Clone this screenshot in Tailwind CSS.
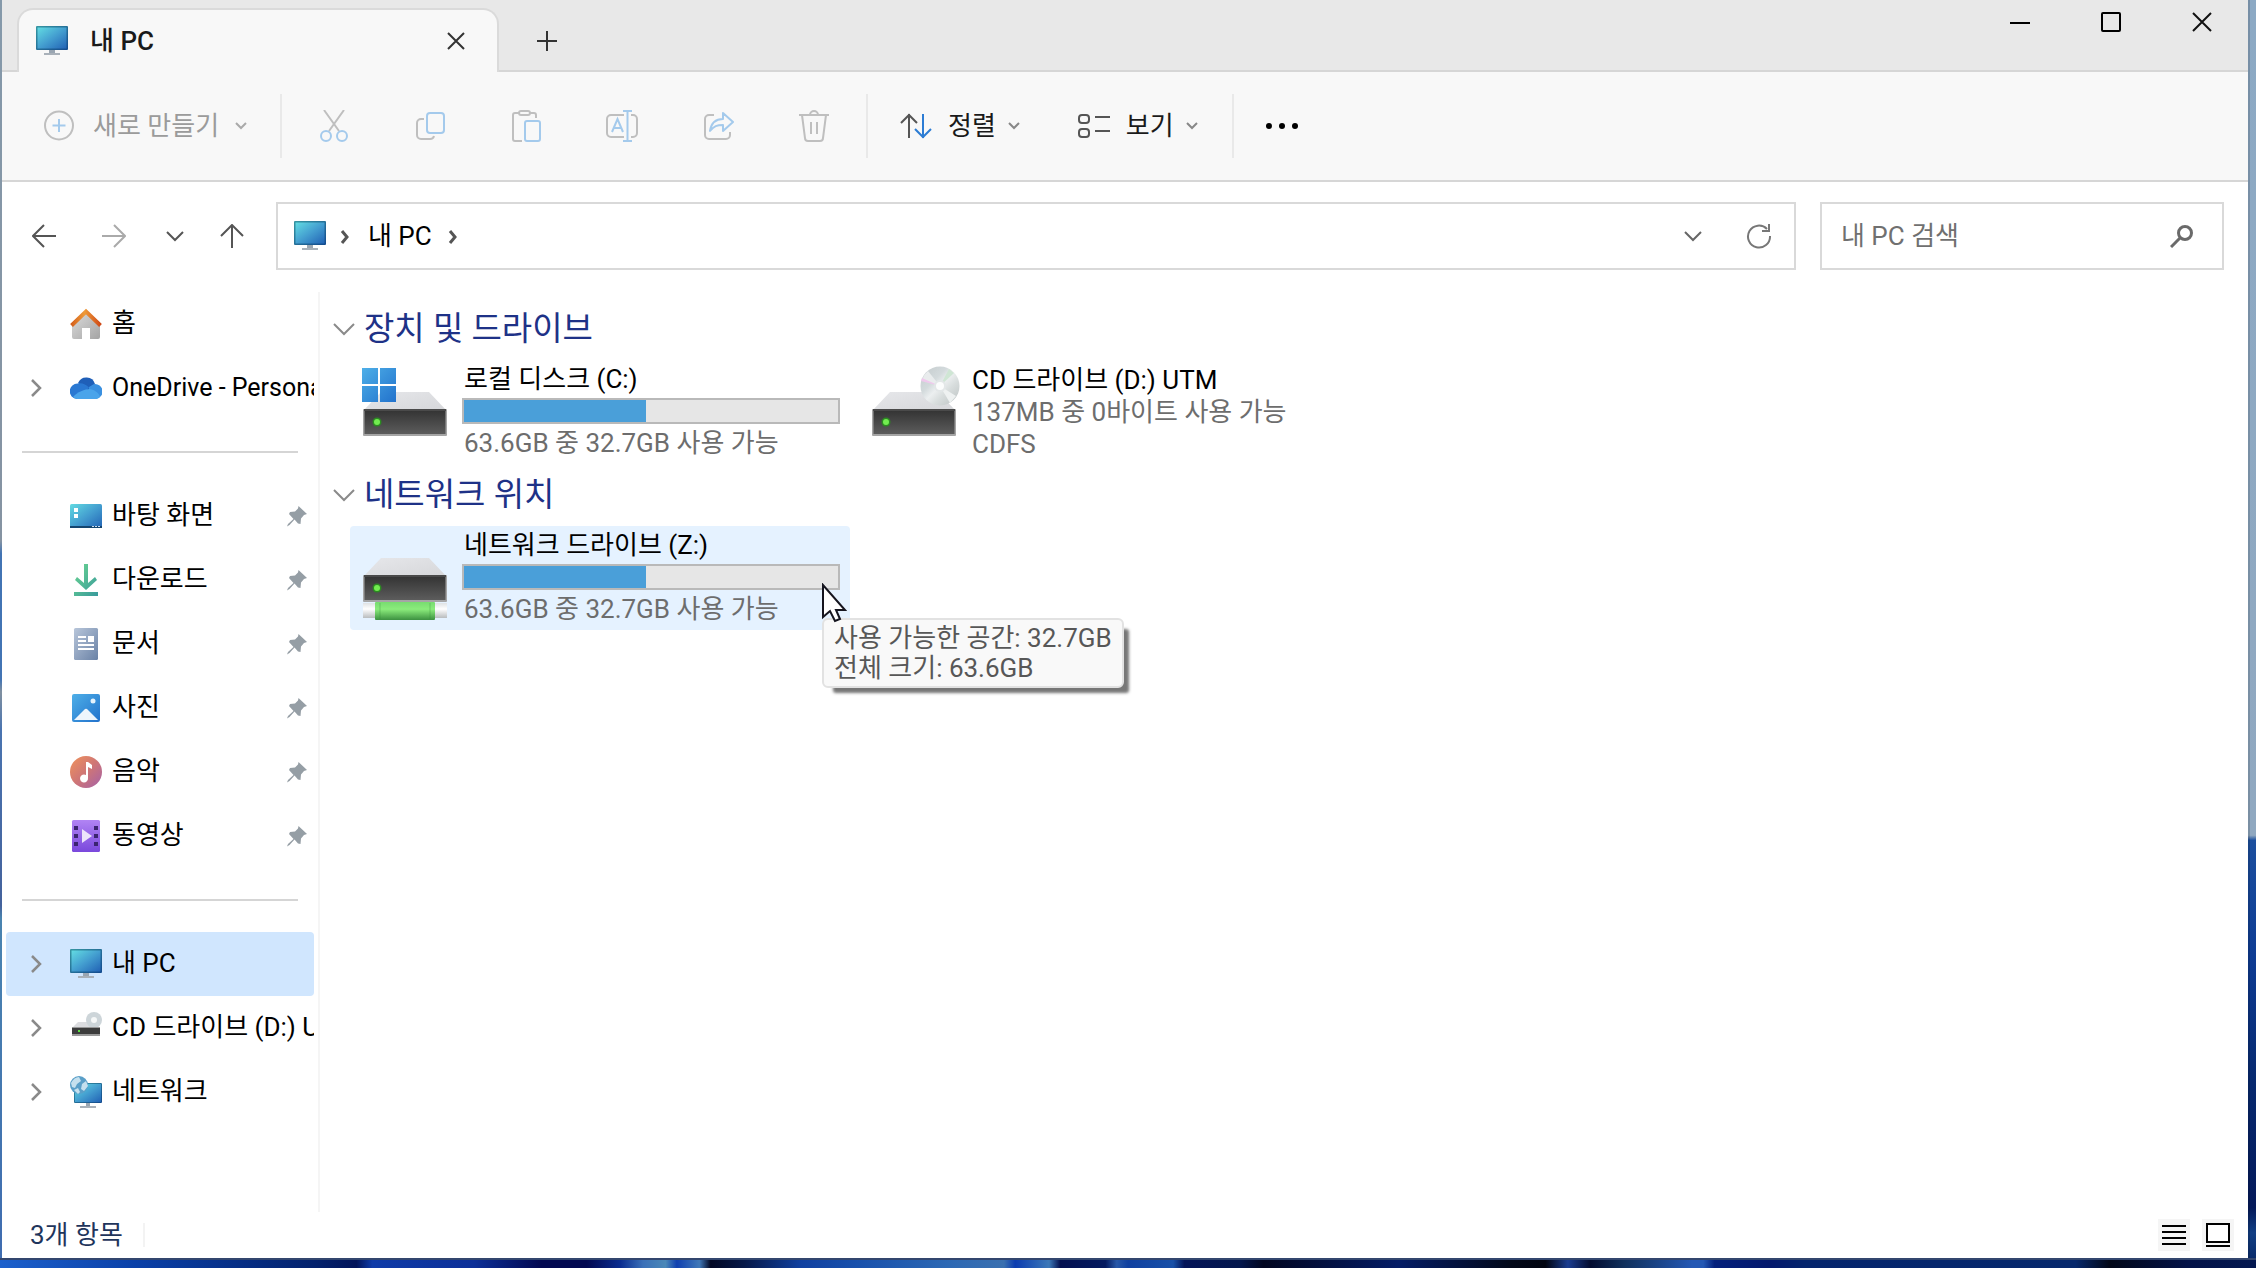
<!DOCTYPE html>
<html lang="ko">
<head>
<meta charset="utf-8">
<title>내 PC</title>
<script src="https://cdn.jsdelivr.net/npm/@tailwindcss/browser@4"></script>
</head>
<body class="font-[Roboto,'Noto_Sans_CJK_KR',sans-serif] text-black">
<svg class="absolute w-0 h-0" aria-hidden="true">
  <defs>
    <linearGradient id="gScreen" x1="0" y1="0" x2="1" y2="1"><stop offset="0" stop-color="#62dbe2"/><stop offset=".5" stop-color="#449fd0"/><stop offset="1" stop-color="#2263b5"/></linearGradient>
    <linearGradient id="gFrame" x1="0" y1="0" x2="1" y2="1"><stop offset="0" stop-color="#3796a2"/><stop offset="1" stop-color="#134a8e"/></linearGradient>
    <linearGradient id="gTop" x1="0" y1="0" x2="1" y2="1"><stop offset="0" stop-color="#e6e7ea"/><stop offset="1" stop-color="#d6d7da"/></linearGradient>
    <linearGradient id="gBox" x1="0" y1="0" x2="0" y2="1"><stop offset="0" stop-color="#333"/><stop offset="1" stop-color="#5c5c5c"/></linearGradient>
    <linearGradient id="gWin" x1="0" y1="0" x2="1" y2="1"><stop offset="0" stop-color="#4eafe8"/><stop offset="1" stop-color="#2272cc"/></linearGradient>
    <linearGradient id="gRoof" x1="0" y1="0" x2="1" y2="0"><stop offset="0" stop-color="#d4601c"/><stop offset=".45" stop-color="#ee9a38"/><stop offset="1" stop-color="#cf4a18"/></linearGradient>
    <linearGradient id="gHouse" x1="0" y1="0" x2="1" y2="1"><stop offset="0" stop-color="#dcdcdc"/><stop offset="1" stop-color="#a4a4a4"/></linearGradient>
    <linearGradient id="gDown" x1="0" y1="0" x2="1" y2="1"><stop offset="0" stop-color="#6cd690"/><stop offset="1" stop-color="#389a9c"/></linearGradient>
    <linearGradient id="gDoc" x1="0" y1="0" x2="1" y2="1"><stop offset="0" stop-color="#b8c6da"/><stop offset="1" stop-color="#6a82a6"/></linearGradient>
    <linearGradient id="gMusic" x1="0" y1="0" x2="1" y2="1"><stop offset="0" stop-color="#f0935a"/><stop offset=".5" stop-color="#cf7676"/><stop offset="1" stop-color="#a561a8"/></linearGradient>
    <linearGradient id="gVideo" x1="0" y1="0" x2="0" y2="1"><stop offset="0" stop-color="#b184f4"/><stop offset="1" stop-color="#7a48dc"/></linearGradient>
    <linearGradient id="gDisc" x1="0" y1="0" x2="1" y2="1"><stop offset="0" stop-color="#c3cacc"/><stop offset=".35" stop-color="#d3dadc"/><stop offset=".5" stop-color="#eceff0"/><stop offset=".65" stop-color="#d9dede"/><stop offset="1" stop-color="#b9c0c0"/></linearGradient>
    <linearGradient id="gPipe" x1="0" y1="0" x2="0" y2="1"><stop offset="0" stop-color="#dfe2e4"/><stop offset=".4" stop-color="#fff"/><stop offset="1" stop-color="#b9bcbe"/></linearGradient>
    <linearGradient id="gGreen" x1="0" y1="0" x2="0" y2="1"><stop offset="0" stop-color="#78dc70"/><stop offset=".4" stop-color="#8bec7c"/><stop offset="1" stop-color="#3c9140"/></linearGradient>
    <symbol id="monitor" viewBox="0 0 32 32"><path d="M13 25h6v4h-6z" fill="#9aa6b2"/><path d="M8 28h16v2H8z" fill="#a9b1b9"/><rect y="1" width="32" height="24" rx="1" fill="url(#gFrame)"/><rect x="1.500" y="2.500" width="29" height="21" fill="url(#gScreen)"/></symbol>
    <symbol id="pin" viewBox="0 0 22 22"><path d="M12.500 1 21 9l-3 1-3 3.500-.500 5.500-2.500-.500-3.500-4-5 5.500-2.500 1.500 1-2.500 5.500-5L3 9l1-2 5-.500 3-3z" fill="#959ea5"/></symbol>
    <symbol id="right" viewBox="0 0 12 20"><path d="m2 2 8 8-8 8" fill="none" stroke="#8a8a8a" stroke-width="2.500"/></symbol>
    <symbol id="down" viewBox="0 0 12 8"><path d="m1 1 5 5 5-5" fill="none" stroke="currentColor" stroke-width="2"/></symbol>
    <symbol id="drive" viewBox="0 0 84 46"><path d="M18 1h48l17 18H1z" fill="url(#gTop)"/><rect y="18" width="84" height="27" rx="1" fill="#a5a5a5"/><rect x="1.500" y="19" width="81" height="24" fill="url(#gBox)"/><path d="M1 18h82v2H1z" fill="#4a4a4a"/><circle cx="14" cy="31" r="4.500" fill="#2c8a22"/><circle cx="14" cy="31" r="3" fill="#72ec50"/></symbol>
    <symbol id="disc" viewBox="0 0 40 40"><circle cx="20" cy="20" r="19.500" fill="url(#gDisc)"/><path d="M20 20 2 14A19 19 0 0 1 8 5z" fill="#e9eced"/><path d="m20 20-19-5 1-3z" fill="#efc9ec"/><path d="m20 20 9-17 5 4z" fill="#cfe6d4"/><path d="m20 20 16 10-6 7z" fill="#eef1f1"/><circle cx="20" cy="20" r="6" fill="#e3e7e8"/><circle cx="20" cy="20" r="4" fill="#fbfcfc"/></symbol>
  </defs>
</svg>

<div class="grid min-h-screen grid-cols-[2px_minmax(0,1fr)_8px] grid-rows-[1fr_10px]">
  <div class="bg-[linear-gradient(#8599aa_0%,#8593a2_43%,#4274b4_44%,#4274b4_54%,#8090a0_55%,#4a74b0_58%,#44629c_72%,#4a84b0_73%,#3f6cb0_100%)]"></div>

  <div class="flex min-w-0 flex-col bg-white">
    <!-- Title bar -->
    <header class="flex h-[72px] shrink-0 items-start bg-[#e8e8e8] shadow-[inset_0_-2px_0_#d6d6d6]">
      <div class="ml-[15px] mt-2 flex h-16 w-[482px] items-center rounded-t-2xl border-2 border-b-0 border-[#dadada] bg-[#f8f8f8] pl-[17px] pr-8">
        <svg class="size-8"><use href="#monitor"/></svg>
        <h1 class="ml-[22px] text-[26px] leading-8 font-medium text-[#1a1a1a]">내 PC</h1>
        <button class="ml-auto" aria-label="탭 닫기"><svg class="size-[18px]" viewBox="0 0 18 18"><path d="m1 1 16 16M17 1 1 17" stroke="#333" stroke-width="2"/></svg></button>
      </div>
      <button class="ml-[38px] mt-[31px]" aria-label="새 탭"><svg class="size-5" viewBox="0 0 20 20"><path d="M10 0v20M0 10h20" stroke="#333" stroke-width="2"/></svg></button>
      <div class="ml-auto mr-9 mt-3 flex gap-[71px]">
        <button aria-label="최소화"><svg class="size-5" viewBox="0 0 20 20"><path d="M0 11h20" stroke="#000" stroke-width="2"/></svg></button>
        <button aria-label="최대화"><svg class="size-5" viewBox="0 0 20 20"><rect x="1" y="1" width="18" height="18" rx="1" fill="none" stroke="#000" stroke-width="2"/></svg></button>
        <button aria-label="닫기"><svg class="size-5" viewBox="0 0 20 20"><path d="m1 1 18 18M19 1 1 19" stroke="#111" stroke-width="2"/></svg></button>
      </div>
    </header>

    <!-- Command bar -->
    <div class="flex h-[110px] shrink-0 items-center border-b-2 border-[#d6d6d6] bg-[#f8f8f8] text-[26px] leading-8">
      <button class="flex w-[278px] items-center pl-[41px] text-[#9b9b9b]" disabled>
        <svg class="size-8" viewBox="0 0 32 32" fill="none" stroke-width="2"><circle cx="16" cy="15.500" r="14" stroke="#bfbfbf"/><path d="M16 9v13M9.500 15.500h13" stroke="#a4caec"/></svg>
        <span class="ml-[18px]">새로 만들기</span>
        <svg class="ml-4 h-2 w-3 text-[#aaa]"><use href="#down"/></svg>
      </button>
      <div class="h-16 w-[2px] bg-[#e9e9e9]"></div>
      <div class="flex w-[584px] justify-between px-1">
        <button class="flex w-24 justify-center" aria-label="잘라내기" disabled><svg class="size-8" viewBox="0 0 32 32" fill="none" stroke-width="2"><path d="m6 0 15 21M26 0 11 21" stroke="#bfbfbf"/><circle cx="8" cy="26" r="5" stroke="#a4caec"/><circle cx="24" cy="26" r="5" stroke="#a4caec"/></svg></button>
        <button class="flex w-24 justify-center" aria-label="복사" disabled><svg class="size-8" viewBox="0 0 32 32" fill="none" stroke-width="2"><path d="M10 9H7a4 4 0 0 0-4 4v12a4 4 0 0 0 4 4h9a4 4 0 0 0 4-3" stroke="#bfbfbf"/><rect x="13" y="3" width="17" height="20" rx="3" stroke="#a4caec"/></svg></button>
        <button class="flex w-24 justify-center" aria-label="붙여넣기" disabled><svg class="size-8" viewBox="0 0 32 32" fill="none" stroke-width="2"><path d="M12 31H5a2 2 0 0 1-2-2V5a2 2 0 0 1 2-2h4M19 3h5a2 2 0 0 1 2 2v3" stroke="#bfbfbf"/><rect x="9" y="1" width="11" height="4" rx="2" stroke="#bfbfbf"/><rect x="15" y="11" width="15" height="20" rx="2" stroke="#a4caec"/></svg></button>
        <button class="flex w-24 justify-center" aria-label="이름 바꾸기" disabled><svg class="size-8" viewBox="0 0 32 32" fill="none" stroke-width="2"><path d="M18 5H5a4 4 0 0 0-4 4v14a4 4 0 0 0 4 4h13M25 5h2a4 4 0 0 1 4 4v14a4 4 0 0 1-4 4h-2" stroke="#bfbfbf"/><path d="M21.500 1v30M17 1h9M17 31h9M6 22l5.500-13L17 22M8 18h7" stroke="#a4caec"/></svg></button>
        <button class="flex w-24 justify-center" aria-label="공유" disabled><svg class="size-8" viewBox="0 0 32 32" fill="none" stroke-width="2"><path d="M12 5H7a4 4 0 0 0-4 4v16a4 4 0 0 0 4 4h17a4 4 0 0 0 4-4v-3" stroke="#bfbfbf"/><path d="M21 3v6C13 9 9 14 8 21c4-5 7-6 13-6v6l10-9z" stroke="#a4caec" stroke-linejoin="round"/></svg></button>
        <button class="flex w-24 justify-center" aria-label="삭제" disabled><svg class="size-8" viewBox="0 0 32 32" fill="none" stroke="#bfbfbf" stroke-width="2"><path d="M1 5h30M4 5l3 23a3 3 0 0 0 3 3h12a3 3 0 0 0 3-3l3-23M12 5a4 4 0 0 1 8 0M13 12v12M19 12v12"/></svg></button>
      </div>
      <div class="h-16 w-[2px] bg-[#e9e9e9]"></div>
      <button class="ml-8 flex items-center text-[#1a1a1a]">
        <svg class="size-8" viewBox="0 0 32 32" fill="none" stroke-width="2"><path d="M9 28V4M1 13l8-8 8 8" stroke="#555"/><path d="M23 4v24M15 19l8 8 8-8" stroke="#2c7cd4"/></svg>
        <span class="ml-4">정렬</span>
        <svg class="ml-3 h-2 w-3 text-[#888]"><use href="#down"/></svg>
      </button>
      <button class="ml-[58px] flex items-center text-[#1a1a1a]">
        <svg class="size-8" viewBox="0 0 32 32" fill="none" stroke="#555" stroke-width="2"><rect x="1" y="5" width="10" height="8" rx="3"/><rect x="1" y="19" width="10" height="8" rx="3"/><path d="M17 7h15M17 21h15"/></svg>
        <span class="ml-4">보기</span>
        <svg class="ml-3 h-2 w-3 text-[#888]"><use href="#down"/></svg>
      </button>
      <div class="ml-[34px] h-16 w-[2px] bg-[#e9e9e9]"></div>
      <button class="ml-8" aria-label="더 보기"><svg class="h-1.5 w-8" viewBox="0 0 32 6"><circle cx="3" cy="3" r="3"/><circle cx="16" cy="3" r="3"/><circle cx="29" cy="3" r="3"/></svg></button>
    </div>

    <!-- Address row -->
    <div class="flex h-[108px] shrink-0 items-center pl-[30px] pr-6">
      <nav class="flex w-[244px] items-center" aria-label="탐색">
        <button aria-label="뒤로"><svg class="size-6" viewBox="0 0 24 24" fill="none" stroke="#555" stroke-width="2"><path d="M24 12H2M12 1 1 12l11 11"/></svg></button>
        <button class="ml-[46px]" aria-label="앞으로"><svg class="size-6" viewBox="0 0 24 24" fill="none" stroke="#aaa" stroke-width="2"><path d="M0 12h22M12 1l11 11-11 11"/></svg></button>
        <button class="ml-10" aria-label="최근 위치"><svg class="h-3 w-[18px]" viewBox="0 0 18 12" fill="none" stroke="#555" stroke-width="2"><path d="m1 2 8 8 8-8"/></svg></button>
        <button class="ml-9" aria-label="위로"><svg class="size-6" viewBox="0 0 24 24" fill="none" stroke="#555" stroke-width="2"><path d="M12 24V2M1 12 12 1l11 11"/></svg></button>
      </nav>
      <div class="flex h-[68px] min-w-0 flex-1 items-center border-2 border-[#d9d9d9] pl-4 pr-[22px] text-[26px] leading-8">
        <svg class="size-8"><use href="#monitor"/></svg>
        <svg class="ml-3.5 h-4 w-2.5" viewBox="0 0 10 16" fill="none" stroke="#555" stroke-width="3"><path d="m2 3 5 6-5 6"/></svg>
        <a href="#" class="ml-[18px]">내 PC</a>
        <svg class="ml-4 h-4 w-2.5" viewBox="0 0 10 16" fill="none" stroke="#555" stroke-width="3"><path d="m2 3 5 6-5 6"/></svg>
        <button class="ml-auto" aria-label="이전 위치"><svg class="h-3 w-[18px]" viewBox="0 0 18 12" fill="none" stroke="#666" stroke-width="2"><path d="m1 2 8 8 8-8"/></svg></button>
        <button class="ml-11" aria-label="새로 고침"><svg class="size-[26px]" viewBox="0 0 26 26" fill="none" stroke="#777" stroke-width="2"><path d="M21 6a11 11 0 1 0 3 7M23 1v7h-7"/></svg></button>
      </div>
      <label class="ml-6 flex h-[68px] w-[404px] items-center border-2 border-[#d9d9d9] pl-[19px] pr-7">
        <input type="text" aria-label="내 PC 검색" placeholder="내 PC 검색" class="min-w-0 flex-1 text-[26px] leading-8 outline-none placeholder:text-[#707070]">
        <svg class="size-6" viewBox="0 0 24 24" fill="none" stroke="#6a6a6a" stroke-width="3"><circle cx="15" cy="9" r="6.500"/><path d="M10.500 13.500 1 23"/></svg>
      </label>
    </div>

    <div class="flex flex-1 pt-0.5">
      <!-- Navigation pane -->
      <aside class="w-[318px] shrink-0 border-r-2 border-[#f5f5f5] px-1">
        <ul class="text-[26px] leading-8 [&>li>a]:flex [&>li>a]:h-16 [&>li>a]:items-center [&>li>a]:overflow-hidden [&>li>a]:whitespace-nowrap [&>li>a]:rounded [&>li>a]:pl-6">
          <li><a href="#"><span class="mr-7 w-3"></span><svg class="size-8 shrink-0" viewBox="0 0 32 32"><path d="M2 17 16 4l14 13v12a2 2 0 0 1-2 2h-8V20h-8v11H4a2 2 0 0 1-2-2z" fill="url(#gHouse)"/><path d="M1.500 17.500 16 3.500l14.500 14" fill="none" stroke="url(#gRoof)" stroke-width="4"/></svg><span class="ml-2.5 mb-0.5">홈</span></a></li>
          <li><a href="#" class="text-[25px]"><svg class="mr-7 h-5 w-3 shrink-0"><use href="#right"/></svg><svg class="size-8 shrink-0" viewBox="0 0 32 32"><path d="M8 11a9 9 0 0 1 17 1l-7 8z" fill="#1f5fb8"/><path d="M7 27a7 7 0 0 1 1-15.500c4-1 8 1 11 4L10 27z" fill="#2a78d2"/><path d="M24 12a7.500 7.500 0 0 1 2 15h-8l1-12z" fill="#3a90e0"/><path d="M3 25c4-5 12-8 17-8 5 1 9 4 10 8a7 7 0 0 1-4 2H7a7 7 0 0 1-4-2z" fill="#4aa4ea"/></svg><span class="ml-2.5">OneDrive - Personal</span></a></li>
          <li class="flex h-16 items-center" role="separator"><div class="mx-4 h-[2px] flex-1 bg-[#d5d5d5]"></div></li>
          <li><a href="#"><span class="mr-7 w-3"></span><svg class="size-8 shrink-0" viewBox="0 0 32 32"><rect y="4" width="32" height="24" rx="1.500" fill="url(#gScreen)"/><path d="M0 26h32v2H0z" fill="#13456f"/><path d="M4 8h4v4H4zM4 14h4v4H4z" fill="#fff"/><path d="M22 26h2v1h-2zM25 26h2v1h-2zM28 26h2v1h-2z" fill="#cde"/></svg><span class="ml-2.5 mb-0.5">바탕 화면</span><svg class="ml-auto mr-1.5 size-[22px]"><use href="#pin"/></svg></a></li>
          <li><a href="#"><span class="mr-7 w-3"></span><svg class="size-8 shrink-0" viewBox="0 0 32 32"><path d="M14 0h4v19l7-6 2 3-11 10L5 16l2-3 7 6zM4 28h24v4H4z" fill="url(#gDown)"/></svg><span class="ml-2.5 mb-0.5">다운로드</span><svg class="ml-auto mr-1.5 size-[22px]"><use href="#pin"/></svg></a></li>
          <li><a href="#"><span class="mr-7 w-3"></span><svg class="size-8 shrink-0" viewBox="0 0 32 32"><rect x="4" width="24" height="32" rx="1.500" fill="url(#gDoc)"/><path d="M8 8h8v2H8zM8 12h8v2H8zM18 8h6v6h-6zM8 16h16v2H8zM8 20h16v2H8z" fill="#fff"/></svg><span class="ml-2.5 mb-0.5">문서</span><svg class="ml-auto mr-1.5 size-[22px]"><use href="#pin"/></svg></a></li>
          <li><a href="#"><span class="mr-7 w-3"></span><svg class="size-8 shrink-0" viewBox="0 0 32 32"><rect x="2" y="2" width="28" height="28" rx="2" fill="url(#gWin)"/><path d="m4 28 11-11a2 2 0 0 1 2 0l11 11z" fill="#eef5fc"/><circle cx="23" cy="9" r="2.500" fill="#e4f2fc"/></svg><span class="ml-2.5 mb-0.5">사진</span><svg class="ml-auto mr-1.5 size-[22px]"><use href="#pin"/></svg></a></li>
          <li><a href="#"><span class="mr-7 w-3"></span><svg class="size-8 shrink-0" viewBox="0 0 32 32"><circle cx="16" cy="16" r="16" fill="url(#gMusic)"/><path d="M16 6h2l4 3v4l-4-2v11a4 4 0 1 1-2-3z" fill="#fff"/></svg><span class="ml-2.5 mb-0.5">음악</span><svg class="ml-auto mr-1.5 size-[22px]"><use href="#pin"/></svg></a></li>
          <li><a href="#"><span class="mr-7 w-3"></span><svg class="size-8 shrink-0" viewBox="0 0 32 32"><rect x="2" width="28" height="32" rx="1.500" fill="url(#gVideo)"/><path d="M4 6h4v4H4zM4 14h4v4H4zM4 22h4v4H4zM24 6h4v4h-4zM24 14h4v4h-4zM24 22h4v4h-4z" fill="#3b2470"/><path d="m12 9 10 7-10 7z" fill="#ece4fa"/></svg><span class="ml-2.5 mb-0.5">동영상</span><svg class="ml-auto mr-1.5 size-[22px]"><use href="#pin"/></svg></a></li>
          <li class="flex h-16 items-center" role="separator"><div class="mx-4 h-[2px] flex-1 bg-[#d5d5d5]"></div></li>
          <li><a href="#" class="bg-[#d0e6fe]" aria-current="page"><svg class="mr-7 h-5 w-3 shrink-0"><use href="#right"/></svg><svg class="size-8 shrink-0"><use href="#monitor"/></svg><span class="ml-2.5 mb-0.5">내 PC</span></a></li>
          <li><a href="#"><svg class="mr-7 h-5 w-3 shrink-0"><use href="#right"/></svg><svg class="size-8 shrink-0" viewBox="0 0 32 32"><path d="M8 10h17l5 6H2z" fill="#dcdde0"/><circle cx="24" cy="8" r="8" fill="#cdd5d9"/><circle cx="24" cy="8" r="3" fill="#f6f8f8"/><rect x="2" y="15" width="28" height="9" fill="#999"/><path d="M2 16h28v6H2z" fill="#3c3c3c"/><path d="M8 18h2v2H8z" fill="#5ce040"/></svg><span class="ml-2.5 mb-0.5">CD 드라이브 (D:) UTM</span></a></li>
          <li><a href="#"><svg class="mr-7 h-5 w-3 shrink-0"><use href="#right"/></svg><svg class="size-8 shrink-0" viewBox="0 0 32 32"><path d="M16 27h4v3h-4z" fill="#9aa6b2"/><path d="M10 30h16v2H10z" fill="#a9b1b9"/><rect x="4" y="7" width="28" height="20" rx="1" fill="url(#gFrame)"/><rect x="5" y="8" width="26" height="18" fill="url(#gScreen)"/><circle cx="9" cy="9" r="9" fill="#5a9fc8"/><path d="M1 7c2-4 5-6 8-6l2 4-4 3-2 4-3-1zM12 8l4-3 2 5-4 5-3-2zM4 14l4-2 2 4-2 2z" fill="#c5e0ee"/></svg><span class="ml-2.5 mb-0.5">네트워크</span></a></li>
        </ul>
      </aside>

      <!-- Content -->
      <main class="min-w-0 flex-1 pl-3 pt-1.5 text-[26px] leading-8">
        <section>
          <h2 class="flex h-[62px] items-center text-[33px] leading-10 text-[#1e3287]">
            <svg class="mr-2 h-3.5 w-6" viewBox="0 0 24 14" fill="none" stroke="#8a8a8a" stroke-width="2"><path d="m2 2 10 10L22 2"/></svg>장치 및 드라이브</h2>
          <div class="ml-[18px] flex flex-wrap gap-x-2">
            <article class="flex h-26 w-[500px] pl-3">
              <svg class="mt-2 h-[70px] w-[86px] shrink-0" viewBox="0 0 86 70"><use href="#drive" x="1" y="23" width="84" height="46"/><path d="M0 0h16v16H0zM18 0h16v16H18zM0 18h16v16H0zM18 18h16v16H18z" fill="url(#gWin)"/></svg>
              <div class="ml-3.5 w-[378px] pt-[3px]">
                <h3 class="pl-0.5">로컬 디스크 (C:)</h3>
                <div class="my-[3px] h-[26px] border-2 border-[#b9b9b9] bg-[#e6e6e6]" role="meter" aria-label="사용 공간" aria-valuenow="49" aria-valuemin="0" aria-valuemax="100"><div class="h-full bg-[#4a9fd9]" style="width:48.6%"></div></div>
                <p class="pl-0.5 text-[#6d6d6d]">63.6GB 중 32.7GB 사용 가능</p>
              </div>
            </article>
            <article class="flex h-26 w-[500px] pl-3.5">
              <svg class="mt-1.5 h-[72px] w-[90px] shrink-0" viewBox="0 0 90 72"><use href="#drive" x="0" y="25" width="84" height="46"/><use href="#disc" x="48" y="0" width="40" height="40"/></svg>
              <div class="ml-2.5 pt-1">
                <h3>CD 드라이브 (D:) UTM</h3>
                <p class="text-[#6d6d6d]">137MB 중 0바이트 사용 가능</p>
                <p class="text-[#6d6d6d]">CDFS</p>
              </div>
            </article>
          </div>
        </section>
        <section>
          <h2 class="flex h-[62px] items-center text-[33px] leading-10 text-[#1e3287]">
            <svg class="mr-2 h-3.5 w-6" viewBox="0 0 24 14" fill="none" stroke="#8a8a8a" stroke-width="2"><path d="m2 2 10 10L22 2"/></svg>네트워크 위치</h2>
          <div class="ml-[18px] flex">
            <article class="relative flex h-26 w-[500px] rounded bg-[#e5f2ff] pl-3">
              <svg class="mt-[31px] h-[64px] w-[86px] shrink-0" viewBox="0 0 86 64"><rect x="1" y="46" width="84" height="15" fill="url(#gPipe)"/><use href="#drive" x="1" y="0" width="84" height="46"/><rect x="13" y="45" width="60" height="18" rx="1" fill="url(#gGreen)"/><path d="M18 46v16M68 46v16" stroke="#2f8a35" stroke-opacity=".35"/></svg>
              <div class="ml-3.5 w-[378px] pt-[3px]">
                <h3 class="pl-0.5">네트워크 드라이브 (Z:)</h3>
                <div class="my-[3px] h-[26px] border-2 border-[#b9b9b9] bg-[#e6e6e6]" role="meter" aria-label="사용 공간" aria-valuenow="49" aria-valuemin="0" aria-valuemax="100"><div class="h-full bg-[#4a9fd9]" style="width:48.6%"></div></div>
                <p class="pl-0.5 text-[#6d6d6d]">63.6GB 중 32.7GB 사용 가능</p>
              </div>
              <div class="absolute left-[472px] top-[92px] h-[70px] w-[302px] rounded-md border-2 border-[#e2e2e2] bg-[#f9f9f9] pl-2.5 pt-[3px] leading-[30px] whitespace-nowrap text-[#575757] shadow-[8px_8px_3px_-3px_#777]" role="tooltip">사용 가능한 공간: 32.7GB<br>전체 크기: 63.6GB</div>
              <svg class="absolute left-[471px] top-[57px] h-10 w-7" viewBox="0 0 28 40"><path d="M2 2v32l7-6 5 10 5-2-4-9h9z" fill="#fff" stroke="#15151f" stroke-width="2"/></svg>
            </article>
          </div>
        </section>
      </main>
    </div>

    <!-- Status bar -->
    <footer class="flex h-[46px] shrink-0 items-center pl-7 pr-3.5 text-[26px] leading-8 text-[#1f355c]">
      <span>3개 항목</span>
      <div class="ml-5 h-6 w-[2px] bg-[#f3f3f3]"></div>
      <div class="ml-auto flex gap-3">
        <button class="flex h-8 w-8 items-center justify-center bg-[#f5f5f5]" aria-label="자세히"><svg class="size-6" viewBox="0 0 24 24"><path d="M0 3h24M0 9h24M0 15h24M0 21h24" stroke="#000" stroke-width="2"/></svg></button>
        <button class="flex h-8 w-8 items-center justify-center bg-[#f5f5f5]" aria-label="큰 아이콘"><svg class="size-6" viewBox="0 0 24 24"><rect x="1" y="1" width="22" height="18" fill="#fff" stroke="#000" stroke-width="2"/><path d="M0 23h24" stroke="#000" stroke-width="2"/></svg></button>
      </div>
    </footer>
  </div>

  <!-- Desktop showing around the window -->
  <div class="border-l-2 border-black/15 bg-[linear-gradient(#8ca9c4_0%,#90a8c0_66.400%,#1c4f9e_66.800%,#0e3c94_76%,#07296f_86%,#04195a_96%,#123f84_98%,#0a2c6c_100%)]"></div>
  <div class="col-span-3 border-t-2 border-[#33466e] bg-[linear-gradient(90deg,#1c60cc_0%,#0a40a8_6%,#03216c_14%,#02145a_15.800%,#0f3ba8_16.500%,#0c2f98_21%,#020850_24%,#020850_26%,#0a2c90_27.500%,#3a70b8_28.500%,#4a88b8_29.500%,#1040b0_30%,#4078b8_31%,#020824_31.500%,#061848_33%,#1040a0_35.500%,#1850ac_38%,#2c68b4_42%,#3a70b0_44.500%,#0c3cb0_45%,#3c78b8_46.500%,#041050_47%,#041a60_49%,#2858a8_49.500%,#1040a0_50%,#1850a8_52%,#041458_52.500%,#03164c_55%,#020620_56%,#041c66_62%,#020818_67%,#010410_68.500%,#1a3c90_69.500%,#030c30_70.500%,#10305c_72%,#2458b4_75%,#2458b4_75.500%,#04207c_76%,#04186c_78.500%,#04246c_80%,#06286c_92%,#020818_93.500%,#031248_97%,#041850_100%)]"></div>
</div>
</body>
</html>
